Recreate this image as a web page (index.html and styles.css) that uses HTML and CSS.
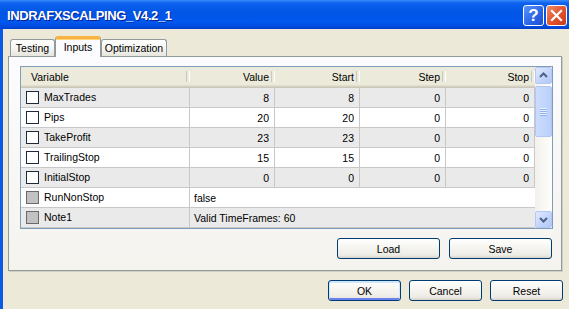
FILE: index.html
```html
<!DOCTYPE html>
<html lang="en">
<head>
    <meta charset="UTF-8">
    <title>INDRAFXSCALPING_V4.2_1</title>
    <link rel="stylesheet" href="styles.css">
</head>
<body>
    <div class="window">
        <div class="titlebar">
            <span class="title">INDRAFXSCALPING_V4.2_1</span>
            <div class="caption-buttons">
                <button class="cap-btn help">?</button>
                <button class="cap-btn close">
                    <svg width="13" height="13" viewBox="0 0 13 13">
                        <path d="M2 2 L11 11 M11 2 L2 11" stroke="#fff" stroke-width="2.2" stroke-linecap="square"/>
                    </svg>
                </button>
            </div>
        </div>

        <div class="body">
            <div class="tabs">
                <div class="tab tab-testing">Testing</div>
                <div class="tab tab-inputs active">Inputs</div>
                <div class="tab tab-optimization">Optimization</div>
            </div>

            <div class="panel">
                <div class="listview">
                    <div class="grid-wrap">
                        <table class="grid">
                            <colgroup>
                                <col style="width: 169px">
                                <col style="width: 85px">
                                <col style="width: 85px">
                                <col style="width: 86px">
                                <col>
                            </colgroup>
                            <thead>
                                <tr>
                                    <th class="name-col">Variable</th>
                                    <th>Value</th>
                                    <th>Start</th>
                                    <th>Step</th>
                                    <th>Stop</th>
                                </tr>
                            </thead>
                            <tbody>
                                <tr>
                                    <td class="name-col"><span class="check"></span>MaxTrades</td>
                                    <td>8</td><td>8</td><td>0</td><td>0</td>
                                </tr>
                                <tr>
                                    <td class="name-col"><span class="check"></span>Pips</td>
                                    <td>20</td><td>20</td><td>0</td><td>0</td>
                                </tr>
                                <tr>
                                    <td class="name-col"><span class="check"></span>TakeProfit</td>
                                    <td>23</td><td>23</td><td>0</td><td>0</td>
                                </tr>
                                <tr>
                                    <td class="name-col"><span class="check"></span>TrailingStop</td>
                                    <td>15</td><td>15</td><td>0</td><td>0</td>
                                </tr>
                                <tr>
                                    <td class="name-col"><span class="check"></span>InitialStop</td>
                                    <td>0</td><td>0</td><td>0</td><td>0</td>
                                </tr>
                                <tr>
                                    <td class="name-col"><span class="check disabled"></span>RunNonStop</td>
                                    <td class="wide" colspan="4">false</td>
                                </tr>
                                <tr>
                                    <td class="name-col"><span class="check disabled"></span>Note1</td>
                                    <td class="wide" colspan="4">Valid TimeFrames: 60</td>
                                </tr>
                            </tbody>
                        </table>
                    </div>
                    <div class="scrollbar">
                        <div class="sb-btn">
                            <svg width="15" height="15" viewBox="0 0 15 15">
                                <path d="M4 9 L7.5 5.5 L11 9" fill="none" stroke="#4D6185" stroke-width="2"/>
                            </svg>
                        </div>
                        <div class="sb-thumb"><span class="grip"></span></div>
                        <div class="sb-track"></div>
                        <div class="sb-btn">
                            <svg width="15" height="15" viewBox="0 0 15 15">
                                <path d="M4 6 L7.5 9.5 L11 6" fill="none" stroke="#4D6185" stroke-width="2"/>
                            </svg>
                        </div>
                    </div>
                </div>

                <div class="panel-buttons">
                    <button class="btn wide-btn">Load</button>
                    <button class="btn wide-btn">Save</button>
                </div>
            </div>

            <div class="dialog-buttons">
                <button class="btn default">OK</button>
                <button class="btn">Cancel</button>
                <button class="btn">Reset</button>
            </div>
        </div>
    </div>
</body>
</html>
```

FILE: styles.css
```css
* {
    box-sizing: border-box;
}
body {
    margin: 0;
    background: #ECE9D8;
    font-family: "Liberation Sans", Arial, sans-serif;
    font-size: 10.5px;
    color: #000;
}
.window {
    width: 569px;
    height: 309px;
    overflow: hidden;
    background: #ECE9D8;
}

/* title bar */
.titlebar {
    height: 29px;
    display: flex;
    align-items: center;
    justify-content: space-between;
    padding: 1px 2px 0 7px;
    background: linear-gradient(to bottom, #3A8CF8 0px, #0E62EE 3px, #0055E5 12px, #0157EE 22px, #0049DC 27px, #003DCB 29px);
}
.title {
    color: #fff;
    font-weight: bold;
    font-size: 13px;
    letter-spacing: -0.4px;
    text-shadow: 1px 1px 0 #0A1E8C;
}
.caption-buttons {
    display: flex;
    gap: 2px;
}
.cap-btn {
    width: 21px;
    height: 21px;
    padding: 0;
    border: 1px solid #fff;
    border-radius: 3px;
    display: flex;
    align-items: center;
    justify-content: center;
    color: #fff;
}
.help {
    background: linear-gradient(135deg, #5C95F8, #2A63E6 60%, #1B4FD6);
    font: bold 17px "Liberation Sans", Arial, sans-serif;
    line-height: 1;
}
.close {
    background: linear-gradient(135deg, #F08A6A, #E0512C 55%, #C83A14);
}

/* dialog body */
.body {
    height: 280px;
    border-left: 3px solid #0B5AE6;
    padding: 7px 6px 0 5px;
}
.tabs {
    display: flex;
    align-items: flex-end;
    height: 21px;
    margin: 0 0 -1px 2px;
    position: relative;
    z-index: 1;
}
.tab {
    height: 17px;
    margin-bottom: 1px;
    border: 1px solid #919B9C;
    border-bottom: none;
    border-radius: 3px 3px 0 0;
    background: linear-gradient(#FFFFFF, #F3F3EF 60%, #E6E5DE);
    display: flex;
    align-items: center;
    justify-content: center;
}
.tab-testing { width: 45px; }
.tab-inputs { width: 46px; }
.tab-optimization { width: 66px; }
.tab.active {
    height: 21px;
    margin-bottom: 0;
    background: #FCFCFE;
    border-top: 3px solid #F8B340;
    box-shadow: inset 0 1px 0 #FFD57A;
    padding-bottom: 3px;
}

.panel {
    width: 554px;
    height: 215px;
    border: 1px solid #919B9C;
    background: linear-gradient(#FCFCFE, #F4F3EE);
    box-shadow: 1px 1px 0 #D0CEBF;
    padding: 9px 8px 0 11px;
}

/* list view */
.listview {
    height: 163px;
    border: 1px solid #7F9DB9;
    background: #fff;
    display: flex;
}
.grid-wrap {
    flex: 1;
    overflow: hidden;
}
.grid {
    width: 100%;
    table-layout: fixed;
    border-collapse: separate;
    border-spacing: 0;
}
.grid th {
    height: 21px;
    background: #EBEADB;
    font-weight: normal;
    text-align: right;
    padding: 0 6px 2px 0;
    position: relative;
    box-shadow: inset 0 -1px 0 #CBC7B8, inset 0 -2px 0 #D6D2C2, inset 0 -3px 0 #E2DECD;
}
.grid th::after {
    content: '';
    position: absolute;
    right: 0;
    top: 4px;
    bottom: 6px;
    width: 2px;
    border-left: 1px solid #CAC8BB;
    border-right: 1px solid #fff;
}
.grid th.name-col {
    text-align: left;
    padding-left: 10px;
}
.grid td {
    height: 20px;
    border-bottom: 1px solid #C8C8C8;
    border-right: 1px solid #C8C8C8;
    text-align: right;
    padding: 0 5px 0 0;
    white-space: nowrap;
}
.grid tbody tr:nth-child(odd) td {
    background: #EAEAEA;
}
.grid td.name-col {
    text-align: left;
    padding-left: 5px;
}
.grid td.wide {
    text-align: left;
    padding-left: 4px;
    border-right: none;
}
.check {
    display: inline-block;
    width: 13px;
    height: 13px;
    border: 1px solid #1C2A3A;
    background: #fff;
    vertical-align: middle;
    margin: -2px 5px 0 0;
}
.check.disabled {
    background: #C2C2C2;
    border-color: #6A6A6A;
}

/* scrollbar */
.scrollbar {
    width: 17px;
    display: flex;
    flex-direction: column;
    background: linear-gradient(to right, #F3F1EC, #FEFEFB);
}
.sb-btn {
    height: 17px;
    border: 1px solid #B4C8F6;
    border-radius: 2px;
    background: linear-gradient(135deg, #E1EAFE, #C1D3FB 60%, #B2C8F8);
    display: flex;
    align-items: center;
    justify-content: center;
}
.sb-thumb {
    height: 51px;
    margin-top: 2px;
    border: 1px solid #B0C6F5;
    border-radius: 2px;
    background: linear-gradient(to right, #CDDCFD, #BACFFB);
    display: flex;
    align-items: center;
    justify-content: center;
}
.grip {
    width: 7px;
    height: 8px;
    background: repeating-linear-gradient(to bottom, #EEF4FE 0, #EEF4FE 1px, #8CB0F8 1px, #8CB0F8 2px);
}
.sb-track {
    flex: 1;
}

/* buttons */
.btn {
    width: 73px;
    height: 21px;
    padding: 0;
    font: inherit;
    color: #000;
    border: 1px solid #003C74;
    border-radius: 3px;
    background: linear-gradient(#FFFFFF 0%, #F7F6F2 40%, #ECEBE5 85%, #D8D2C6 100%);
}
.btn.wide-btn {
    width: 103px;
}
.btn.default {
    box-shadow: inset 0 1px 0 1px #CEE7FF, inset 0 -1px 0 1px #6982EE;
}
.panel-buttons {
    display: flex;
    justify-content: flex-end;
    gap: 9px;
    margin-top: 9px;
    padding-right: 1px;
}
.dialog-buttons {
    display: flex;
    justify-content: flex-end;
    gap: 8px;
    margin-top: 9px;
}
```
